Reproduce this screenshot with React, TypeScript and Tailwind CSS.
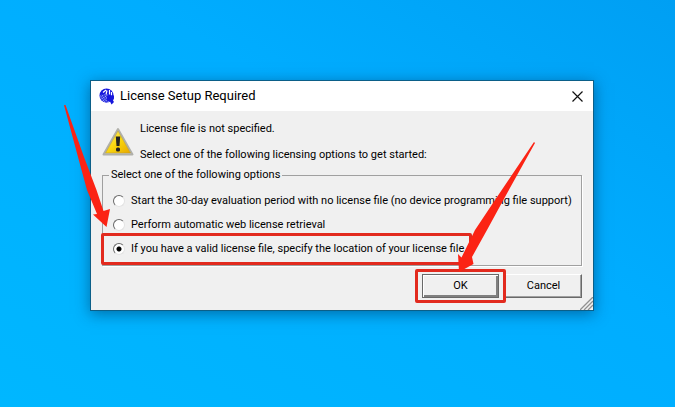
import { useState } from 'react';

const OPTIONS = [
    { id: 'evaluation', label: 'Start the 30-day evaluation period with no license file (no device programming file support)' },
    { id: 'web', label: 'Perform automatic web license retrieval' },
    { id: 'file', label: 'If you have a valid license file, specify the location of your license file', marked: true },
];

function AppIcon() {
    return (
        <svg viewBox="0 0 16 17" className="h-[17px] w-4 shrink-0" aria-hidden="true">
            <defs>
                <pattern id="mesh" width="2" height="2" patternUnits="userSpaceOnUse" patternTransform="rotate(-35)">
                    <rect width="2" height="2" fill="#2a30e0" />
                    <rect width="1" height="1" fill="#c4c8fb" />
                </pattern>
            </defs>
            <circle cx="7.5" cy="7.5" r="7" fill="#1616dc" />
            <path d="M1 7 9 6l1 8A7 7 0 0 1 1 9z" fill="url(#mesh)" />
            <path d="M4 4.500 7 2M7 6.500l1-4M10.500 6.500V2M12.500 7.500V4" stroke="#fff" strokeWidth="1.200" fill="none" />
            <path d="M8 7.500h7v3l-1 2 1 1.500-2.500 2.500-1.500-3-3-1z" fill="#1616dc" />
        </svg>
    );
}

function WarningIcon() {
    return (
        <svg viewBox="0 0 32 30" className="h-[30px] w-8 shrink-0" aria-hidden="true">
            <defs>
                <linearGradient id="warn" x1="0" y1="0" x2="1" y2="1">
                    <stop offset="0" stopColor="#fff27a" />
                    <stop offset="0.500" stopColor="#f9d70e" />
                    <stop offset="1" stopColor="#e8a800" />
                </linearGradient>
            </defs>
            <path d="M16 2 30.500 27.500H1.500z" fill="#d0d0c8" stroke="#b0b0aa" strokeWidth="2" strokeLinejoin="round" />
            <path d="M16 4 28.500 26h-25z" fill="url(#warn)" stroke="#b89a30" strokeWidth="0.500" />
            <path d="M13.800 9.500h4.400l-.7 9.500h-3z" fill="#222" />
            <rect x="14" y="20.500" width="4" height="4" rx="1.500" fill="#222" />
        </svg>
    );
}

function Arrows() {
    return (
        <svg className="pointer-events-none absolute top-0 left-0 h-[407px] w-[675px]" aria-hidden="true">
            <g fill="#fb2314">
                <path d="M64 105h1.500L84 157l12.500 33 7 21 6.500-2-3.500 18L93 214.500l4-.5-10-24-9-33z" />
                <path d="M534 142l1 1-30 54-18 33-15 27 1.500 7-14.500 8-1-18 3.500 3.500L475 230l22-33z" />
            </g>
        </svg>
    );
}

function App() {
    const [option, setOption] = useState('file');

    return (
        <main className="relative min-h-screen bg-linear-to-bl from-[#009ff3] via-[#00adff] via-40% to-[#00b7ff] pt-20 pr-[81px] pb-24 pl-[90px] font-[Roboto,sans-serif] text-[11px] text-black">
            <section
                role="dialog"
                aria-labelledby="dialog-title"
                className="relative border border-[#0b5f88] bg-[#f0f0f0] shadow-[0_3px_14px_rgba(0,40,80,0.5)]"
            >
                <header className="flex h-[30px] items-center bg-white pr-2.5 pl-2">
                    <AppIcon />
                    <h1 id="dialog-title" className="ml-[5px] flex-1 text-[13px] leading-4">
                        License Setup Required
                    </h1>
                    <button type="button" aria-label="Close">
                        <svg viewBox="0 0 11 11" className="size-[11px]" stroke="#111" strokeWidth="1.200">
                            <path d="M.5.5l10 10M10.500.5l-10 10" />
                        </svg>
                    </button>
                </header>

                <div className="px-[11px] pt-2.5 pb-3">
                    <div className="flex items-center gap-1.5">
                        <WarningIcon />
                        <div className="flex flex-col gap-2.5 leading-4">
                            <p>License file is not specified.</p>
                            <p>Select one of the following licensing options to get started:</p>
                        </div>
                    </div>

                    <fieldset className="mt-1 border border-[#a0a0a0] pt-1.5 pr-1 pb-1 pl-2.5 shadow-[1px_1px_0_#fff]">
                        <legend className="-ml-1 px-0.5 leading-4">Select one of the following options</legend>
                        {OPTIONS.map((o) => (
                            <div key={o.id} className="flex h-6 items-center">
                                <label className="relative flex items-center gap-1.5 leading-4">
                                    <input
                                        type="radio"
                                        name="license"
                                        checked={option === o.id}
                                        onChange={() => setOption(o.id)}
                                        className="size-3 shrink-0 appearance-none rounded-full border border-t-[#696969] border-r-[#e3e3e3] border-b-[#e3e3e3] border-l-[#696969] bg-white checked:bg-[radial-gradient(circle,#000_2px,#fff_3px)]"
                                    />
                                    {o.label}
                                    {o.marked && <span className="absolute -inset-y-2 -right-2 -left-3 rounded-xs border-3 border-[#e22a1e]" />}
                                </label>
                            </div>
                        ))}
                    </fieldset>

                    <div className="mt-2 flex justify-end gap-1.5">
                        <button type="button" className="relative h-6 w-[77px] border border-[#696969] bg-[#f0f0f0] shadow-[inset_1px_1px_0_#fff,inset_-2px_-2px_0_#808080]">
                            OK
                            <span className="absolute -inset-x-2 -inset-y-1.5 rounded-xs border-3 border-[#e22a1e]" />
                        </button>
                        <button type="button" className="h-6 w-[77px] border border-t-white border-r-[#696969] border-b-[#696969] border-l-white shadow-[inset_-1px_-1px_0_#a0a0a0]">
                            Cancel
                        </button>
                    </div>
                </div>

                <svg viewBox="0 0 13 13" className="absolute right-0 bottom-0 size-[13px]" stroke="#909090" strokeWidth="1.300" aria-hidden="true">
                    <path d="M0 13 13 0M4 13l9-9M8 13l5-5" />
                </svg>
            </section>
            <Arrows />
        </main>
    );
}

export default App;
